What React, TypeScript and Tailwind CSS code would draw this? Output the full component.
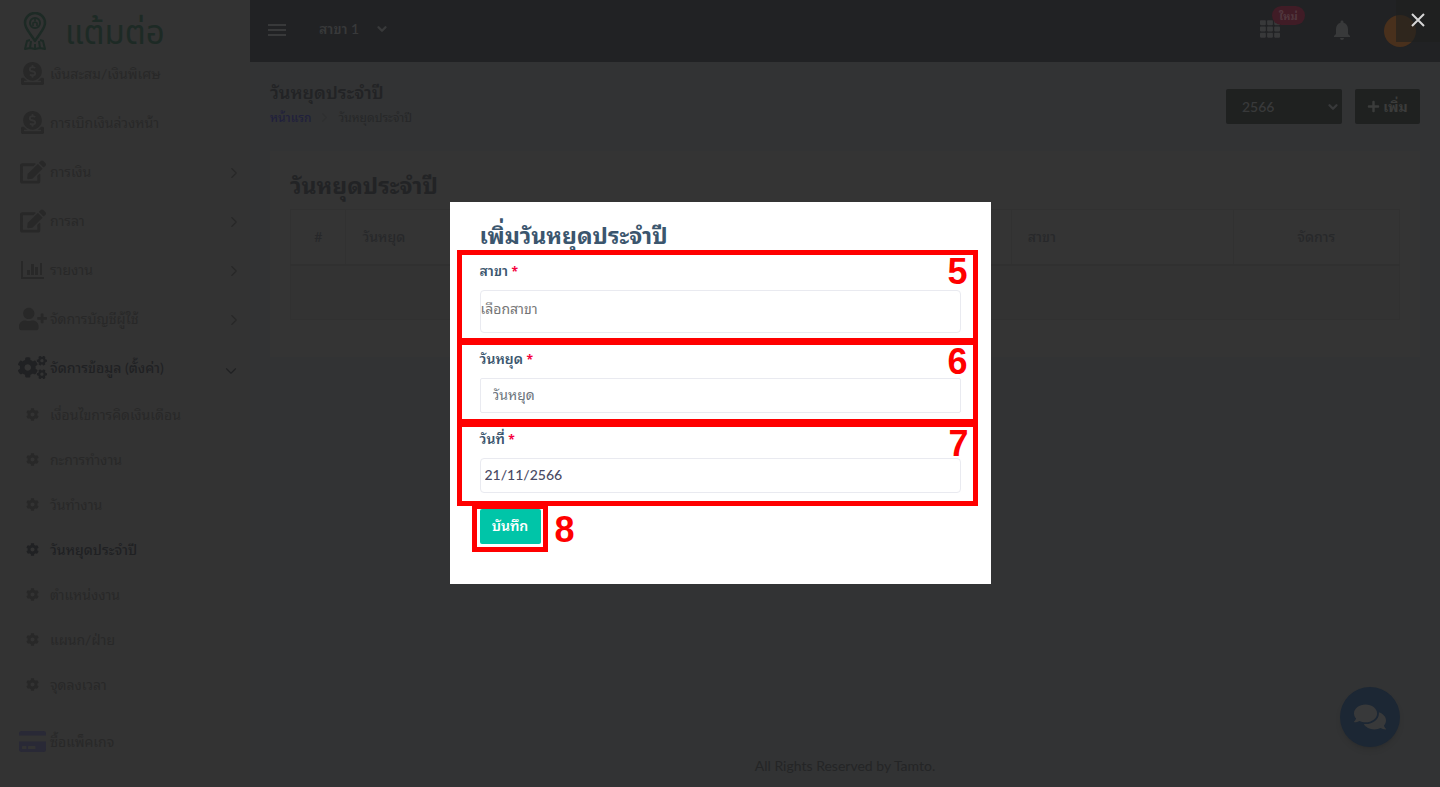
import React from 'react';
import { FaCog, FaCogs, FaComments, FaCreditCard, FaDonate, FaEdit, FaPlus, FaTh, FaUserPlus } from 'react-icons/fa';
import { FiChevronDown, FiChevronRight } from 'react-icons/fi';
import { MdNotifications } from 'react-icons/md';

const ChartIcon = () => (
  <svg viewBox="0 0 24 18" width="24" height="18" fill="currentColor" aria-hidden="true">
    <path d="M0 0h2v16h21v2H0z" />
    <path d="M6 9h3v5H6zM10 3h3v11h-3zM14 6h3v8h-3zM19 2h2v12h-2z" />
  </svg>
);

const PinLogo = () => (
  <svg viewBox="0 0 24 40" width="24" height="40" fill="none" stroke="currentColor" strokeWidth="2" strokeLinejoin="round" className="shrink-0" aria-hidden="true">
    <path d="M12 29C8 22 2 17 2 11a10 10 0 0 1 20 0c0 6-6 11-10 18z" strokeWidth="2.5" />
    <circle cx="12" cy="11" r="5" />
    <path d="M10 14v-3l2-1 2 1v3M12 7v2" strokeWidth="1.5" />
    <path d="M7 28l-3 1-2 8 5-1 5 1 5-1 5 1-2-8-3-1M8 29l-1 7M16 29l1 7M12 32v4" />
  </svg>
);

const menu = [
  { label: 'เงินสะสม/เงินพิเศษ', icon: <FaDonate size={23} /> },
  { label: 'การเบิกเงินล่วงหน้า', icon: <FaDonate size={23} /> },
  { label: 'การเงิน', icon: <FaEdit size={26} />, arrow: true },
  { label: 'การลา', icon: <FaEdit size={26} />, arrow: true },
  { label: 'รายงาน', icon: <ChartIcon />, arrow: true },
  { label: 'จัดการบัญชีผู้ใช้', icon: <FaUserPlus size={28} />, arrow: true },
];

const settings = [
  'เงื่อนไขการคิดเงินเดือน',
  'กะการทำงาน',
  'วันทำงาน',
  'วันหยุดประจำปี',
  'ตำแหน่งงาน',
  'แผนก/ฝ่าย',
  'จุดลงเวลา',
];

function Sidebar() {
  return (
    <aside className="w-[250px] shrink-0 bg-[#333333] text-[#282828]">
      <div className="flex h-[49px] items-start gap-[18px] pt-3 pl-[23px] text-[#1d2a25]">
        <PinLogo />
        <span className="pt-1 font-['Noto_Sans_Thai',sans-serif] text-[33px] leading-9">แต้มต่อ</span>
      </div>
      <nav>
        {menu.map((item) => (
          <a key={item.label} href="#" className="flex h-[49px] items-center pr-[7px] pl-[18px]">
            <span className="flex w-[29px] shrink-0 justify-center">{item.icon}</span>
            <span className="ml-[3px] flex-1">{item.label}</span>
            {item.arrow && <FiChevronRight size={18} strokeWidth={1.5} className="mt-[3px]" />}
          </a>
        ))}
        <a href="#" className="flex h-[49px] items-center pr-2.5 pl-[18px] font-medium text-[#202123]">
          <FaCogs size={29} />
          <span className="ml-[3px] flex-1">จัดการข้อมูล (ตั้งค่า)</span>
          <FiChevronDown size={18} strokeWidth={1.5} className="mt-1.5" />
        </a>
        {settings.map((label) => (
          <a
            key={label}
            href="#"
            className={`flex h-[45px] items-center pl-[26px] ${label === 'วันหยุดประจำปี' ? 'font-medium text-[#202123]' : ''}`}
          >
            <FaCog size={13} />
            <span className="ml-[11px]">{label}</span>
          </a>
        ))}
        <a href="#" className="mt-2.5 flex h-[49px] items-center pl-[19px]">
          <FaCreditCard size={27} className="text-[#292936]" />
          <span className="ml-1">ซื้อแพ็คเกจ</span>
        </a>
      </nav>
    </aside>
  );
}

function TopBar() {
  return (
    <header className="flex h-[62px] items-center bg-[#212224] pr-6 pl-[18px] text-[#38393a]">
      <button aria-label="เมนู" className="flex w-[18px] flex-col gap-[3px] pb-0.5">
        <span className="h-0.5 bg-current" />
        <span className="h-0.5 bg-current" />
        <span className="h-0.5 bg-current" />
      </button>
      <button className="ml-[33px] flex items-center gap-4 pb-1 font-semibold">
        สาขา 1
        <FiChevronDown size={14} strokeWidth={4} />
      </button>
      <div className="ml-auto flex items-center">
        <button aria-label="แอป" className="relative pb-1">
          <FaTh size={20} />
          <span className="absolute -top-[13px] left-3 rounded-full bg-[#401c26] px-[7px] text-[11px] leading-[19px] font-bold whitespace-nowrap text-[#51383e]">
            ใหม่
          </span>
        </button>
        <button aria-label="แจ้งเตือน" className="ml-[50px] pb-0.5">
          <MdNotifications size={24} />
        </button>
        <span className="ml-[30px] size-8 rounded-full bg-[#49301c]" />
      </div>
    </header>
  );
}

function Content() {
  return (
    <main className="flex flex-1 flex-col px-5">
      <div className="flex h-[89px] items-center justify-between">
        <div className="pb-1.5">
          <h1 className="text-[18px] leading-7 font-semibold text-[#222325]">วันหยุดประจำปี</h1>
          <p className="flex items-center gap-[6px] text-[12px] leading-6 text-[#262728]">
            <a href="#" className="font-medium text-[#20203c]">หน้าแรก</a>
            <FiChevronRight size={15} className="text-[#2f3031]" />
            <span>วันหยุดประจำปี</span>
          </p>
        </div>
        <div className="flex gap-[13px]">
          <div className="relative flex">
            <select aria-label="ปี" className="h-[35px] w-[116px] appearance-none rounded-xs bg-[#1f2120] pl-4 font-semibold text-[#38393a]">
              <option>2566</option>
            </select>
            <FiChevronDown size={14} strokeWidth={4} className="pointer-events-none absolute top-[11px] right-0.5 text-[#38393a]" />
          </div>
          <button className="flex h-[35px] w-[65px] items-center justify-center gap-[3px] rounded-xs bg-[#1f2120] font-bold text-[#3b3c3b]">
            <FaPlus size={13} />
            เพิ่ม
          </button>
        </div>
      </div>

      <section className="bg-[#343434] px-5 pt-[18px] pb-[37px]">
        <h2 className="mb-2 text-[23px] leading-8 font-bold text-[#222325]">วันหยุดประจำปี</h2>
        <table className="w-full table-fixed border-collapse border border-[#313131] text-left text-[#27282a]">
          <thead>
            <tr className="h-[55px] border-b-2 border-[#303030]">
              <th className="w-[5%] border-r border-[#313131] text-center font-medium">#</th>
              <th className="w-[60%] border-r border-[#313131] px-4 font-medium">วันหยุด</th>
              <th className="w-[20%] border-r border-[#313131] px-4 font-medium">สาขา</th>
              <th className="w-[15%] text-center font-medium">จัดการ</th>
            </tr>
          </thead>
          <tbody>
            <tr className="h-[55px] bg-[#333333]">
              <td colSpan={4} />
            </tr>
          </tbody>
        </table>
      </section>

      <footer className="mt-auto pb-[11px] text-center text-[#242526]">All Rights Reserved by Tamto.</footer>
    </main>
  );
}

const Required = () => <span className="font-['Open_Sans',sans-serif] text-[12px] font-bold text-[#f5003d]">*</span>;

// red frame with its step number
function Mark({ n, frame, digit }: { n: number; frame: string; digit: string }) {
  return (
    <>
      <span className={`pointer-events-none absolute border-5 border-[#ff0000] ${frame}`} />
      <span className={`pointer-events-none absolute font-['Liberation_Sans',sans-serif] text-[36px] leading-9 font-bold text-[#ff0000] ${digit}`}>
        {n}
      </span>
    </>
  );
}

function HolidayDialog() {
  const label = 'mb-2.5 block h-[19px] leading-[19px] font-semibold text-[#3b566e]';
  const input = 'block w-full border border-[#e9eaf0] bg-white outline-none';

  return (
    <div role="dialog" aria-labelledby="dialog-title" className="w-[541px] bg-white px-[30px] pt-[18px] pb-10">
      <h2 id="dialog-title" className="mb-2.5 text-[23px] leading-[31px] font-bold text-[#3b566e]">เพิ่มวันหยุดประจำปี</h2>
      <form className="flex flex-col items-stretch gap-4">
        <div className="relative">
          <label htmlFor="branch" className={label}>สาขา <Required /></label>
          <input id="branch" placeholder="เลือกสาขา" className={`${input} h-[43px] rounded pb-1.5 placeholder:text-[#757575]`} />
          <Mark n={5} frame="-top-[11px] -right-[17px] -bottom-2.5 -left-[23px]" digit="-top-[7px] -right-[7px]" />
        </div>
        <div className="relative">
          <label htmlFor="holiday" className={label}>วันหยุด <Required /></label>
          <input id="holiday" placeholder="วันหยุด" className={`${input} h-[35px] rounded-xs px-3 pb-0.5 placeholder:text-[#6c757d]`} />
          <Mark n={6} frame="-top-[9px] -right-[17px] -bottom-[11px] -left-[23px]" digit="-top-[5px] -right-[7px]" />
        </div>
        <div className="relative">
          <label htmlFor="date" className={label}>วันที่ <Required /></label>
          <input id="date" defaultValue="21/11/2566" className={`${input} h-[35px] rounded px-1 pb-0.5 font-medium text-[#4a4b65]`} />
          <Mark n={7} frame="-top-[7px] -right-[17px] -bottom-[13px] -left-[23px]" digit="-top-[3px] -right-2" />
        </div>
        <div className="relative self-start">
          <button type="button" className="h-[35px] w-[61px] rounded-xs bg-[#00c5a8] pb-0.5 font-semibold text-white">บันทึก</button>
          <Mark n={8} frame="-top-[5px] -right-[7px] -bottom-2 -left-2" digit="top-[3px] -right-[34px]" />
        </div>
      </form>
    </div>
  );
}

export default function App() {
  return (
    <div className="relative flex min-h-screen bg-[#323334] font-['Lato','Noto_Sans_Thai_Looped','Loma','Garuda','Waree','Umpush','Laksaman','Norasi',sans-serif] text-[14px] leading-5">
      <Sidebar />
      <div className="flex min-w-0 flex-1 flex-col">
        <TopBar />
        <Content />
      </div>

      <button aria-label="แชท" className="fixed right-10 bottom-10 flex size-[60px] items-center justify-center rounded-full bg-[#1c2734] text-[#38393a] shadow-md">
        <FaComments size={32} />
      </button>

      <div className="fixed inset-0 flex items-center justify-center pb-px">
        <HolidayDialog />
        <button aria-label="ปิด" className="absolute top-0 right-0 flex h-[42px] w-11 items-center justify-center bg-[#1e1f1e]/60 pb-0.5 text-[#d6d6d6]">
          <svg viewBox="0 0 14 14" width="14" height="14" stroke="currentColor" strokeWidth="2" aria-hidden="true">
            <path d="M1 1l12 12M13 1L1 13" />
          </svg>
        </button>
      </div>
    </div>
  );
}
